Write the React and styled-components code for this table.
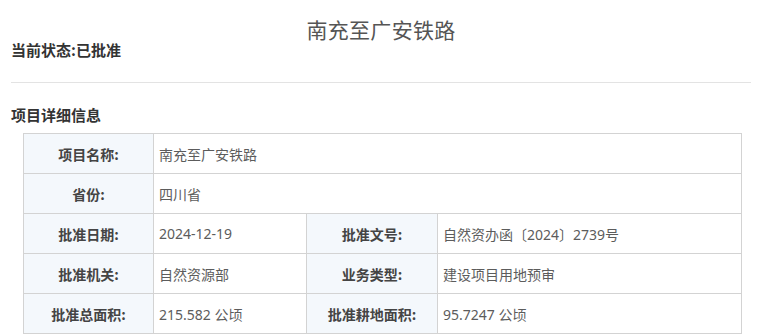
import React from "react";
import styled, { createGlobalStyle } from "styled-components";

const Global = createGlobalStyle`
  html, body { margin: 0; padding: 0; background: #fff; }
  body { font-family: "Noto Sans CJK SC", "Noto Sans", sans-serif; }
`;

const Page = styled.div`
  padding: 0 11px;
`;

const Title = styled.h1`
  margin: 0;
  padding-top: 18px;
  line-height: 22px;
  font-size: 21px;
  font-weight: 400;
  color: #555;
  text-align: center;
  letter-spacing: 0.3px;
`;

const Status = styled.div`
  line-height: 20px;
  font-size: 15px;
  font-weight: 700;
  color: #333;
  padding-bottom: 22px;
  border-bottom: 1px solid #e3e3e3;
`;

const SectionTitle = styled.h2`
  margin: 22px 0 0;
  line-height: 20px;
  font-size: 15px;
  font-weight: 700;
  color: #333;
`;

const Table = styled.table`
  margin: 8px 10px 0 12px;
  width: 718px;
  border-collapse: collapse;
  table-layout: fixed;
  border: 1px solid #d3d3d3;
`;

const Row = styled.tr`
  height: 40px;
`;

const Label = styled.th`
  border: 1px solid #d3d3d3;
  background: #f4f8fc;
  font-size: 14px;
  font-weight: 700;
  color: #444;
  text-align: center;
  padding: 0;
  height: 39px;
`;

const Value = styled.td`
  border: 1px solid #d3d3d3;
  font-family: "Noto Sans", "Noto Sans CJK SC", sans-serif;
  font-size: 14px;
  color: #5c5c5c;
  text-align: left;
  padding: 0 0 0 5px;
  height: 39px;
`;

const rows = [
  [["项目名称:", "南充至广安铁路"]],
  [["省份:", "四川省"]],
  [["批准日期:", "2024-12-19"], ["批准文号:", "自然资办函〔2024〕2739号"]],
  [["批准机关:", "自然资源部"], ["业务类型:", "建设项目用地预审"]],
  [["批准总面积:", "215.582 公顷"], ["批准耕地面积:", "95.7247 公顷"]],
];

export default function App() {
  return (
    <Page>
      <Global />
      <Title>南充至广安铁路</Title>
      <Status>当前状态:已批准</Status>
      <SectionTitle>项目详细信息</SectionTitle>
      <Table>
        <colgroup>
          <col style={{ width: 130 }} />
          <col style={{ width: 153 }} />
          <col style={{ width: 131 }} />
          <col style={{ width: 304 }} />
        </colgroup>
        <tbody>
          {rows.map((r, i) => (
            <Row key={i}>
              {r.map(([l, v], j) => (
                <React.Fragment key={j}>
                  <Label>{l}</Label>
                  <Value colSpan={r.length === 1 ? 3 : 1}>{v}</Value>
                </React.Fragment>
              ))}
            </Row>
          ))}
        </tbody>
      </Table>
    </Page>
  );
}
